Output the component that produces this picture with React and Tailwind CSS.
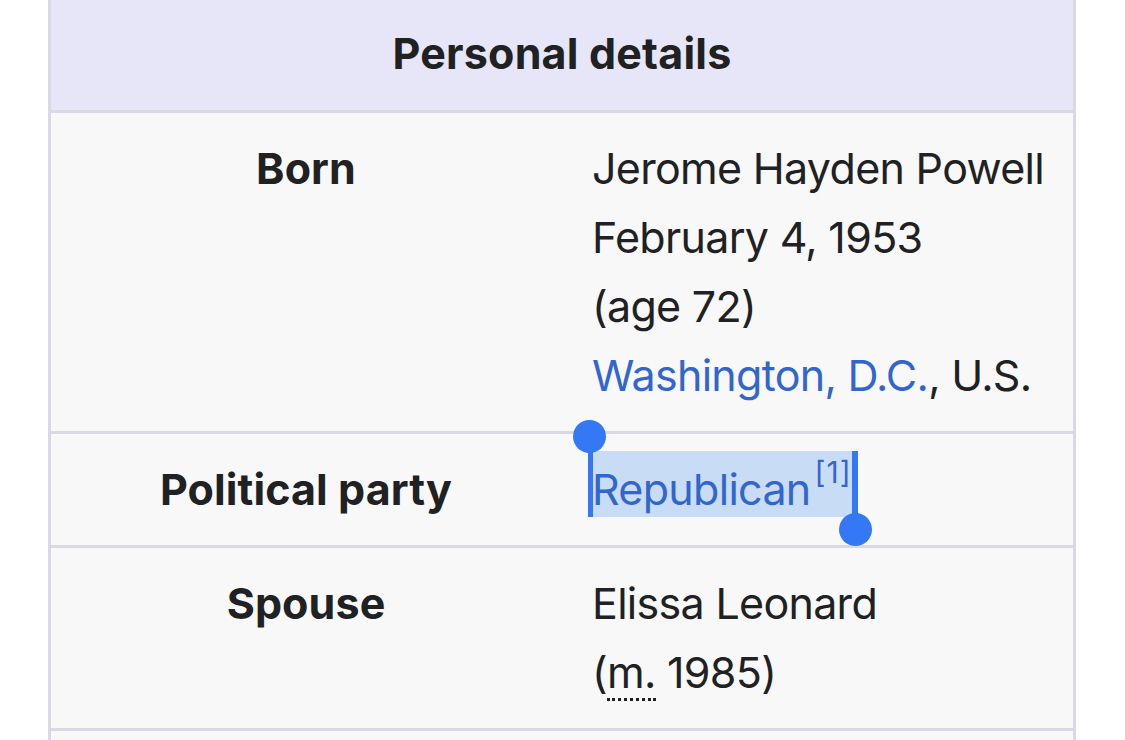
import React from 'react'

const font = { fontFamily: 'Inter, "Noto Sans", "Liberation Sans", sans-serif' }

function Row({ label, children }) {
  return (
    <div className="grid grid-cols-[510px_1fr] border-b-[3px] border-[#d9d9e3]">
      <div className="py-[21px] text-center font-bold tracking-[0.1px] text-[#202122]">{label}</div>
      <div className="py-[21px] pl-[31px] tracking-[-0.7px] text-[#202122]">{children}</div>
    </div>
  )
}

export default function App() {
  return (
    <div className="w-[1125px] h-[740px] overflow-hidden bg-white" style={font}>
      <div className="ml-[48px] w-[1028px] border-x-[3px] border-[#d9d9e3] bg-[#f8f8f9] text-[43px] leading-[69px]">
        {/* header */}
        <div className="h-[113px] bg-[#e6e6f8] border-b-[3px] border-[#d9d9e3] flex items-center justify-center pb-[3px]">
          <span className="font-bold tracking-[0.2px] text-[#202122]">Personal details</span>
        </div>

        <Row label="Born">
          <div>Jerome Hayden Powell</div>
          <div>February 4, 1953</div>
          <div>(age 72)</div>
          <div>
            <span className="text-[#3366cc]">Washington, D.C.</span>, U.S.
          </div>
        </Row>

        <Row label="Political party">
          <span className="relative inline-block">
            {/* selection highlight + handles */}
            <span className="absolute left-0 right-[-3px] top-[-4px] h-[66px] bg-[#c9dcf5]" />
            <span className="absolute left-[-4px] top-[-15px] w-[5px] h-[77px] bg-[#3478f6]" />
            <span className="absolute left-[-19px] top-[-35px] w-[33px] h-[33px] rounded-full bg-[#3478f6]" />
            <span className="absolute right-[-6px] top-[-4px] w-[6px] h-[79px] bg-[#3478f6]" />
            <span className="absolute right-[-20px] top-[58px] w-[33px] h-[33px] rounded-full bg-[#3478f6]" />
            <span className="relative text-[#3366cc]">
              Republican
              <sup className="ml-[4px] text-[30px] top-[-0.72em] tracking-[1px]">[1]</sup>
            </span>
          </span>
        </Row>

        <Row label="Spouse">
          <div>Elissa Leonard</div>
          <div>
            (<abbr className="no-underline border-b-[3px] border-dotted border-[#202122] leading-none">m.</abbr> 1985)
          </div>
        </Row>

        <div className="h-[60px]" />
      </div>
    </div>
  )
}
